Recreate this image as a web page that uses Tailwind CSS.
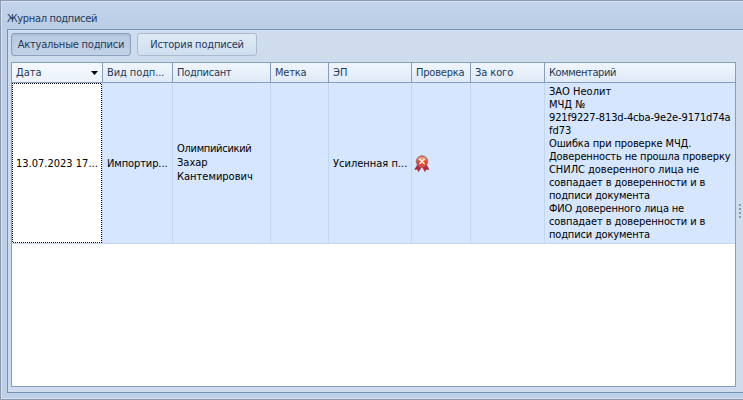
<!DOCTYPE html>
<html lang="ru">
<head>
<meta charset="utf-8">
<title>Журнал подписей</title>
<script src="https://cdn.jsdelivr.net/npm/@tailwindcss/browser@4"></script>
</head>
<body class="w-[743px] h-[400px] overflow-hidden font-['DejaVu_Sans_Condensed','DejaVu_Sans',sans-serif] [font-stretch:condensed] text-[11px] leading-[13px] text-black">
<div class="w-[743px] h-[400px] flex flex-col border-l border-y border-[#8e99ae] bg-[#bdd0e7]">
  <div class="flex-1 flex flex-col border-l border-y border-[#d6e2f1] pl-[5px] pb-[5px]">
    <header class="h-[27px] shrink-0 -ml-[5px] pl-[5px] pt-[10px] bg-linear-to-b from-[#c3d4eb] to-[#b9cde5] text-[#1e395b] whitespace-nowrap"><span class="tracking-[-0.33px]">Журнал подписей</span></header>
    <main class="flex-1 flex flex-col border-l border-y border-[#7592b5] bg-[#cfdced] pl-[3px] pt-[3px] pb-[5px]">
      <div class="flex gap-[6px] h-[23px] shrink-0 text-[#1e395b] whitespace-nowrap tracking-[-0.2px]">
        <button class="w-[120px] h-[23px] rounded-[3px] border border-[#8ba0bf] bg-linear-to-b from-[#b7c9df] to-[#c3d3e6] shadow-[inset_0_1px_2px_#a5b7cf]"><span>Актуальные подписи</span></button>
        <button class="w-[120px] h-[23px] rounded-[3px] border border-[#abbad0] bg-linear-to-b from-[#e0eaf6] to-[#cfdeee]"><span>История подписей</span></button>
      </div>
      <div class="flex mt-[6px] flex-1">
        <div class="w-[725px] border border-[#859ebf] bg-white flex flex-col">
          <div class="grid grid-cols-[91px_70px_98px_58px_83px_59px_74px_190px] h-[20px] border-b border-[#859ebf] bg-linear-to-b from-[#f0f6fd] to-[#dfeaf7] text-[#1e395b] whitespace-nowrap leading-[19px] *:border-r *:border-[#859ebf] *:pl-[4px] *:last:border-r-0">
            <div class="flex items-center justify-between pr-[4px] bg-linear-to-b from-[#f5f9fe] to-[#eaf2fb]"><span>Дата</span><svg class="mt-px" width="7" height="4" viewBox="0 0 7 4"><path d="M0 0h7L3.5 4z" fill="#000"/></svg></div>
            <div><span class="tracking-[-0.1px]">Вид подп...</span></div>
            <div><span class="tracking-[-0.3px]">Подписант</span></div>
            <div><span class="tracking-[-0.2px]">Метка</span></div>
            <div><span>ЭП</span></div>
            <div><span class="tracking-[-0.2px]">Проверка</span></div>
            <div><span class="tracking-[-0.1px]">За кого</span></div>
            <div><span class="tracking-[-0.42px]">Комментарий</span></div>
          </div>
          <div class="grid grid-cols-[91px_70px_98px_58px_83px_59px_74px_190px] h-[161px] border-b border-[#c2d5f1] bg-[#d5e6fe] whitespace-nowrap *:flex *:items-center *:border-r *:border-[#c2d5f1] *:pl-[4px] *:last:border-r-0">
            <div class="relative bg-white">
              <i class="absolute left-0 top-0 w-[90px] h-px bg-[repeating-linear-gradient(90deg,#000_0_1px,#fff_1px_2px)]"></i>
              <i class="absolute left-0 bottom-0 w-[90px] h-px bg-[repeating-linear-gradient(90deg,#fff_0_1px,#000_1px_2px)]"></i>
              <i class="absolute left-0 top-0 w-px h-[160px] bg-[repeating-linear-gradient(180deg,#000_0_1px,#fff_1px_2px)]"></i>
              <i class="absolute right-0 top-0 w-px h-[160px] bg-[repeating-linear-gradient(180deg,#fff_0_1px,#000_1px_2px)]"></i>
              <span>13.07.2023 17...</span></div>
            <div><span class="tracking-[-0.1px]">Импортир...</span></div>
            <div class="leading-[14px]"><p><span class="tracking-[-0.3px]">Олимпийсикий</span><br><span>Захар</span><br><span>Кантемирович</span></p></div>
            <div></div>
            <div><span>Усиленная п...</span></div>
            <div><svg class="-ml-[2px]" width="16" height="17" viewBox="0 0 16 17"><path d="M4 9 0.7 14.5 3.2 14.2 4.5 16.6 8 11.5 11 16.6 12.3 14.2 15 14.5 12 9z" fill="#bd2438" stroke="#8e2639" stroke-width=".5"/><circle cx="8" cy="6.5" r="5.7" fill="#e9492d" stroke="#987078" stroke-width=".9"/><path d="M3.5 5a4.8 4.8 0 0 1 9 0Q8 7 3.5 5z" fill="#f39b75"/><path d="m5.5 4 5 5m0-5-5 5" stroke="#fff" stroke-width="1.3"/></svg></div>
            <div></div>
            <div class="leading-[13px]"><p><span>ЗАО Неолит</span><br><span>МЧД №</span><br><span class="tracking-[-0.14px]">921f9227-813d-4cba-9e2e-9171d74a</span><br><span>fd73</span><br><span class="tracking-[-0.13px]">Ошибка при проверке МЧД.</span><br><span class="tracking-[-0.12px]">Доверенность не прошла проверку</span><br><span class="tracking-[-0.04px]">СНИЛС доверенного лица не</span><br><span class="tracking-[-0.1px]">совпадает в доверенности и в</span><br><span class="tracking-[-0.17px]">подписи документа</span><br><span class="tracking-[-0.16px]">ФИО доверенного лица не</span><br><span class="tracking-[-0.1px]">совпадает в доверенности и в</span><br><span class="tracking-[-0.17px]">подписи документа</span></p></div>
          </div>
        </div>
        <div class="flex-1 flex flex-col items-center gap-[2px] pt-[142px] pl-[1px]">
          <i class="size-[2px] bg-[#8199bd]"></i><i class="size-[2px] bg-[#8199bd]"></i><i class="size-[2px] bg-[#8199bd]"></i><i class="size-[2px] bg-[#8199bd]"></i>
        </div>
      </div>
    </main>
  </div>
</div>
</body>
</html>
